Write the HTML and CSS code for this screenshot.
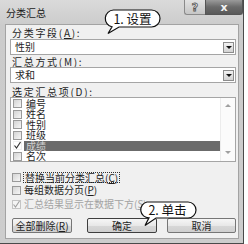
FILE: index.html
```html
<!DOCTYPE html>
<html>
<head>
<meta charset="utf-8">
<link rel="stylesheet" href="styles.css">
</head>
<body>
<div class="window">
  <div class="titlebar">
    <span class="title">分类汇总</span>
    <div class="caption-btns">
      <div class="cap help">?</div>
      <div class="cap close">x</div>
    </div>
  </div>
  <div class="client">
    <div class="label">分类字段(<u>A</u>):</div>
    <div class="select"><span class="val">性别</span><span class="arrow"><i></i></span></div>
    <div class="label l2">汇总方式(<u>M</u>):</div>
    <div class="select s2"><span class="val">求和</span><span class="arrow"><i></i></span></div>
    <div class="label l3">选定汇总项(<u>D</u>):</div>
    <div class="listbox">
      <div class="items">
        <div class="item"><span class="cb"></span><span class="txt">编号</span></div>
        <div class="item"><span class="cb"></span><span class="txt">姓名</span></div>
        <div class="item"><span class="cb"></span><span class="txt">性别</span></div>
        <div class="item"><span class="cb"></span><span class="txt">班级</span></div>
        <div class="item sel"><span class="cb plain"><svg width="9" height="9" viewBox="0 0 9 9"><path d="M1.5 4.5 L3.5 7 L7.5 1" fill="none" stroke="#333" stroke-width="1.2"/></svg></span><span class="txt">成绩</span></div>
        <div class="item"><span class="cb"></span><span class="txt">名次</span></div>
      </div>
      <div class="scroll"><span class="up"></span><span class="down"></span></div>
    </div>
    <div class="opt o1"><span class="cb"></span><span class="otxt focus">替换当前分类汇总(<u>C</u>)</span></div>
    <div class="opt o2"><span class="cb"></span><span class="otxt">每组数据分页(<u>P</u>)</span></div>
    <div class="opt o3 disabled"><span class="cb"><svg width="9" height="9" viewBox="0 0 9 9"><path d="M1.5 4.5 L3.5 7 L7.5 1" fill="none" stroke="#a0a0a0" stroke-width="1.1"/></svg></span><span class="otxt">汇总结果显示在数据下方(<u>S</u>)</span></div>
    <div class="buttons">
      <div class="btn b1">全部删除(<u>R</u>)</div>
      <div class="btn b2 default">确定</div>
      <div class="btn b3">取消</div>
    </div>
  </div>
  <div class="callout c1">
    <svg width="60" height="27" viewBox="0 0 60 27"><path d="M9.5 1 H47.5 A8.5 8.5 0 0 1 47.5 18 H15 L4 24.5 L8 17.8 A8.5 8.5 0 0 1 9.5 1 Z" fill="#fff" stroke="#111" stroke-width="1.2"/></svg>
    <span class="ctext">1. 设置</span>
  </div>
  <div class="callout c2">
    <svg width="62" height="27" viewBox="0 0 62 27"><path d="M9 1 H50 A8 8 0 0 1 50 17 H18 L7 24.5 L11 16.8 A8 8 0 0 1 9 1 Z" fill="#fff" stroke="#111" stroke-width="1.2"/></svg>
    <span class="ctext">2. 单击</span>
  </div>
</div>
</body>
</html>
```

FILE: styles.css
```css
html, body {
  margin: 0;
  padding: 0;
  background: #ffffff;
}
body {
  font-family: "Noto Sans CJK SC", "Noto Sans", sans-serif;
  font-size: 10px;
  color: #1e1e1e;
}
u { text-decoration: underline; text-underline-offset: 1px; }

.window {
  position: relative;
  width: 244px;
  height: 244px;
  box-sizing: border-box;
  background: linear-gradient(#dadada, #cbcbcb 26px, #cdcdcd);
  border-right: 1px solid #4a4a4a;
  border-bottom: 1px solid #4a4a4a;
  display: flex;
  flex-direction: column;
}

.titlebar {
  height: 24px;
  display: flex;
  align-items: flex-start;
  flex: none;
}
.title {
  padding: 7px 0 0 6px;
  font-size: 10px;
  line-height: 11px;
  color: #1a1a1a;
}
.caption-btns {
  margin-left: auto;
  display: flex;
}
.cap {
  height: 15px;
  box-sizing: border-box;
  display: flex;
  align-items: center;
  justify-content: center;
  font-family: "DejaVu Sans", sans-serif;
  font-weight: bold;
}
.help {
  width: 21px;
  border: 1px solid #8a8a8a;
  border-top: none;
  border-right: none;
  border-bottom-left-radius: 3px;
  background: linear-gradient(#e2e2e2, #c6c6c6);
  color: #e8e8e8;
  font-size: 11px;
  -webkit-text-stroke: 0.8px #555;
}
.close {
  width: 38px;
  border: 1px solid #555;
  border-top: none;
  border-bottom-right-radius: 3px;
  background: linear-gradient(#9a9a9a, #6a6a6a 50%, #5a5a5a);
  color: #f4f4f4;
  font-size: 11px;
  line-height: 11px;
}

.client {
  flex: 1;
  margin: 0 4px 4px 5px;
  border: 1px solid #a3a3a3;
  background: #f0f0f0;
  padding: 2px 2px 0 4px;
  display: flex;
  flex-direction: column;
}

.label {
  height: 11px;
  line-height: 11px;
  padding-left: 2px;
  letter-spacing: 1.7px;
}
.l2 { margin-top: 1px; }
.l3 { margin-top: 3px; }

.select {
  margin-top: 1px;
  height: 16px;
  box-sizing: border-box;
  border: 1px solid #a5a5a5;
  background: #ffffff;
  display: flex;
  align-items: center;
}
.s2 { margin-top: 0; }
.select .val {
  padding-left: 4px;
  line-height: 12px;
}
.arrow {
  margin-left: auto;
  margin-right: 1px;
  width: 11px;
  height: 11px;
  box-sizing: border-box;
  border: 1px solid #8c8c8c;
  background: linear-gradient(#f2f2f2, #d2d2d2);
  display: flex;
  align-items: center;
  justify-content: center;
}
.arrow i {
  width: 0;
  height: 0;
  border-left: 3px solid transparent;
  border-right: 3px solid transparent;
  border-top: 3px solid #111;
}

.listbox {
  height: 65px;
  box-sizing: border-box;
  border: 1px solid #a5a5a5;
  background: #ffffff;
  display: flex;
}
.items {
  flex: 1;
  padding-top: 0.5px;
}
.item {
  height: 10.5px;
  display: flex;
  align-items: center;
}
.item .cb { margin-left: 2px; }
.item .txt {
  margin-left: 2px;
  padding-left: 2px;
  line-height: 10.5px;
  height: 10.5px;
  flex: 1;
}
.item.sel .txt {
  background: #6b6b6b;
  color: #d0d0d0;
}
.scroll {
  width: 14px;
  background: #fbfbfb;
  border-left: 1px solid #ececec;
  display: flex;
  flex-direction: column;
  align-items: center;
  justify-content: space-between;
  padding: 6px 0 7px;
}
.scroll .up, .scroll .down {
  width: 0;
  height: 0;
  border-left: 3px solid transparent;
  border-right: 3px solid transparent;
}
.scroll .up { border-bottom: 3px solid #a0a0a0; }
.scroll .down { border-top: 3px solid #a0a0a0; }

.cb {
  width: 9px;
  height: 9px;
  box-sizing: border-box;
  border: 1px solid #9a9a9a;
  background: linear-gradient(135deg, #d4d4d4, #f6f6f6);
  display: flex;
  align-items: center;
  justify-content: center;
  flex: none;
}
.cb svg { display: block; margin: -1px; }
.cb.plain {
  border-color: #f0f0f0;
  background: #ffffff;
}

.opt {
  height: 12px;
  display: flex;
  align-items: center;
}
.opt .cb { margin-left: 2px; }
.opt .otxt {
  margin-left: 2px;
  padding: 0 1px;
  line-height: 10px;
  height: 11px;
  box-sizing: border-box;
}
.o1 { margin-top: 9px; }
.o2 { margin-top: 1px; }
.o3 { margin-top: 2px; }
.focus { border: 1px dotted #333; }
.disabled { color: #a3a3a3; }
.disabled .cb { border-color: #c4c4c4; background: #f4f4f4; }

.buttons {
  margin-top: 8px;
  display: flex;
}
.btn {
  height: 15px;
  box-sizing: border-box;
  border: 1px solid #767676;
  border-radius: 2px;
  background: linear-gradient(#f6f6f6, #e8e8e8 50%, #d8d8d8 51%, #cfcfcf);
  display: flex;
  align-items: center;
  justify-content: center;
  line-height: 11px;
}
.b1 { width: 60px; margin-left: 2px; }
.b2 { width: 70px; margin-left: 15px; }
.b3 { width: 69px; margin-left: 10px; }
.default { border-color: #3f3f3f; }

.callout {
  position: absolute;
}
.callout svg { display: block; }
.ctext {
  position: absolute;
  left: 1px;
  top: 1px;
  height: 17px;
  line-height: 17px;
  text-align: center;
  font-size: 12.5px;
  color: #111;
  white-space: nowrap;
}
.c1 { left: 104px; top: 9px; }
.c1 .ctext { width: 55px; }
.c2 { left: 138px; top: 201px; }
.c2 .ctext { width: 57px; height: 16px; line-height: 16px; }
```
